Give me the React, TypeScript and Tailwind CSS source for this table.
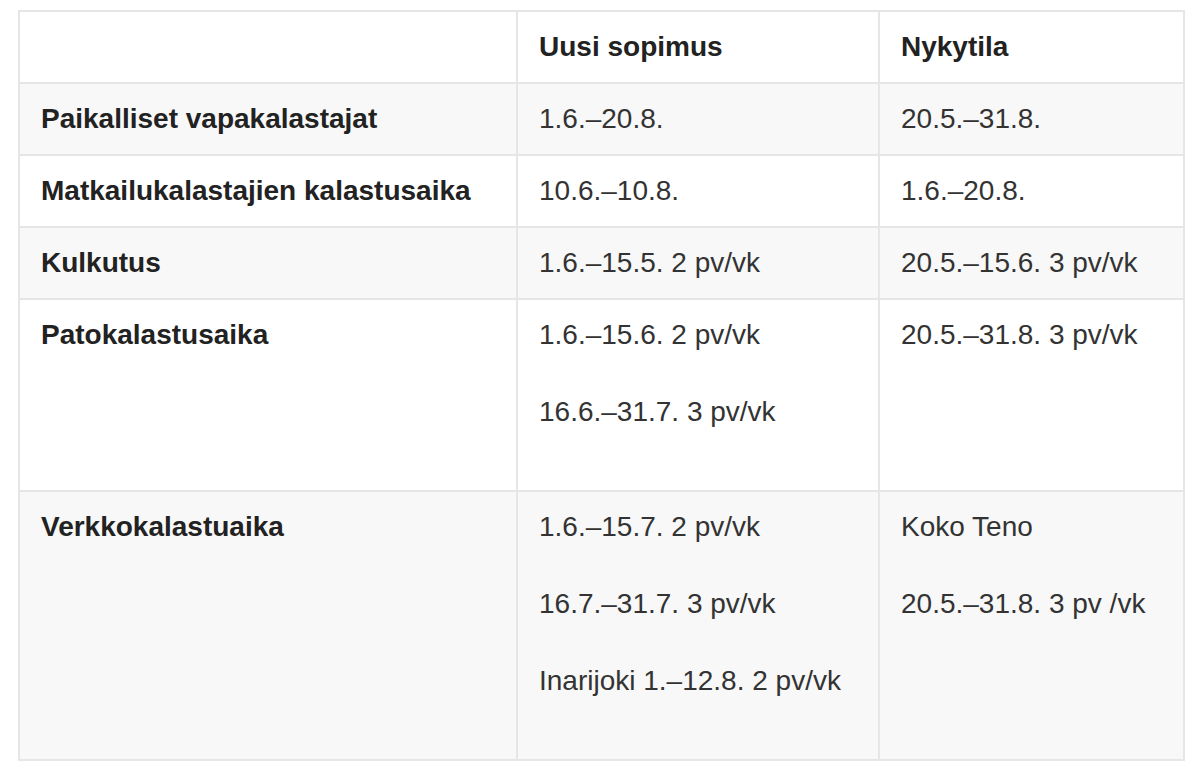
const rows: { label: string; uusi: string[]; nyky: string[] }[] = [
  { label: 'Paikalliset vapakalastajat', uusi: ['1.6.–20.8.'], nyky: ['20.5.–31.8.'] },
  { label: 'Matkailukalastajien kalastusaika', uusi: ['10.6.–10.8.'], nyky: ['1.6.–20.8.'] },
  { label: 'Kulkutus', uusi: ['1.6.–15.5. 2 pv/vk'], nyky: ['20.5.–15.6. 3 pv/vk'] },
  {
    label: 'Patokalastusaika',
    uusi: ['1.6.–15.6. 2 pv/vk', '16.6.–31.7. 3 pv/vk'],
    nyky: ['20.5.–31.8. 3 pv/vk'],
  },
  {
    label: 'Verkkokalastuaika',
    uusi: ['1.6.–15.7. 2 pv/vk', '16.7.–31.7. 3 pv/vk', 'Inarijoki 1.–12.8. 2 pv/vk'],
    nyky: ['Koko Teno', '20.5.–31.8. 3 pv /vk'],
  },
];

function Cell({ lines }: { lines: string[] }) {
  const multi = lines.length > 1;
  return (
    <td className="border-2 border-[#e6e6e6] px-[21px] py-[18px] align-top">
      {lines.map((l, i) => (
        <p key={i} className={`h-[34px] leading-[34px] ${multi ? 'mb-[43px]' : ''}`}>
          {l}
        </p>
      ))}
    </td>
  );
}

export default function App() {
  return (
    <div className="min-h-screen bg-white pt-[10px] pl-[18px] font-['Liberation_Sans',Arial,sans-serif] text-[28px] text-[#333]">
      <table className="w-[1165px] table-fixed border-collapse border-2 border-[#e6e6e6]">
        <colgroup>
          <col className="w-[498px]" />
          <col className="w-[362px]" />
          <col className="w-[305px]" />
        </colgroup>
        <thead>
          <tr className="bg-white">
            <th className="border-2 border-[#e6e6e6] px-[21px] py-[18px] text-left"></th>
            <th className="border-2 border-[#e6e6e6] px-[21px] py-[18px] text-left font-bold leading-[34px] text-[#222]">
              Uusi sopimus
            </th>
            <th className="border-2 border-[#e6e6e6] px-[21px] py-[18px] text-left font-bold leading-[34px] text-[#222]">
              Nykytila
            </th>
          </tr>
        </thead>
        <tbody>
          {rows.map((r, i) => (
            <tr key={r.label} className={i % 2 === 0 ? 'bg-[#f8f8f8]' : 'bg-white'}>
              <td className="border-2 border-[#e6e6e6] px-[21px] py-[18px] align-top font-bold leading-[34px] text-[#222]">
                {r.label}
              </td>
              <Cell lines={r.uusi} />
              <Cell lines={r.nyky} />
            </tr>
          ))}
        </tbody>
      </table>
    </div>
  );
}
